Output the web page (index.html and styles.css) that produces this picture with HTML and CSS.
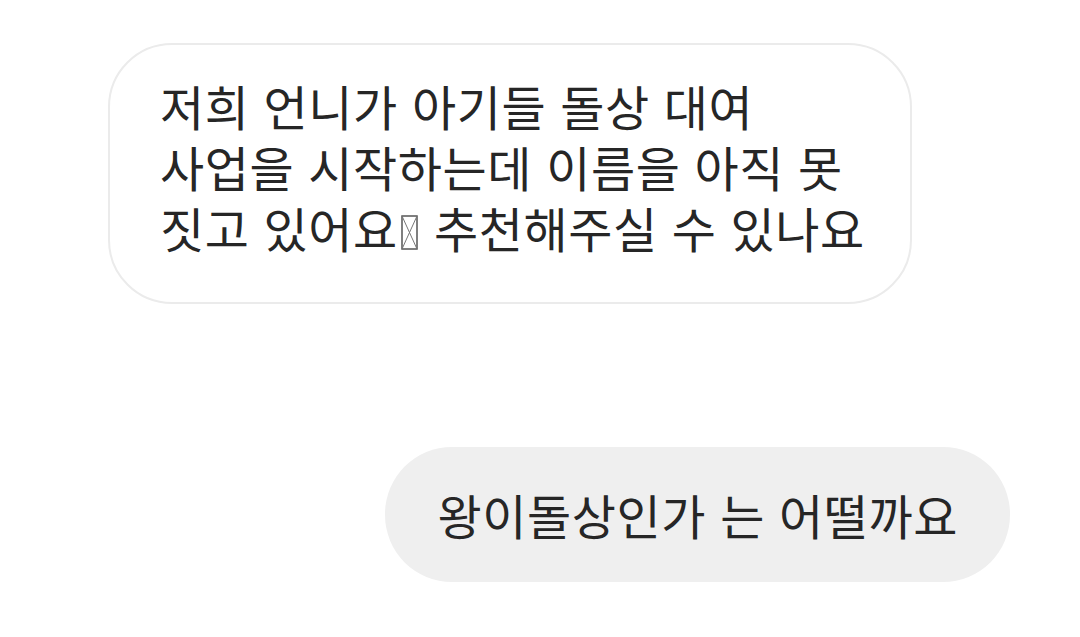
FILE: index.html
```html
<!DOCTYPE html>
<html lang="ko">
<head>
  <meta charset="UTF-8">
  <title>대화</title>
  <link rel="stylesheet" href="styles.css">
</head>
<body>
  <div class="chat">
    <!-- received message -->
    <div class="row row-in">
      <div class="bubble bubble-in">
        저희 언니가 아기들 돌상 대여<br>
        사업을 시작하는데 이름을 아직 못<br>
        짓고 있어요<span class="tofu"><svg width="17" height="35" viewBox="0 0 17 35"><rect x="1" y="1" width="15" height="33" fill="none" stroke="#555" stroke-width="1.5"/><path d="M1 1 L16 34 M16 1 L1 34" stroke="#777" stroke-width="1"/></svg></span> 추천해주실 수 있나요
      </div>
    </div>

    <!-- sent message -->
    <div class="row row-out">
      <div class="bubble bubble-out">왕이돌상인가 는 어떨까요</div>
    </div>
  </div>
</body>
</html>
```

FILE: styles.css
```css
* {
  box-sizing: border-box;
}

body {
  margin: 0;
  background: #fff;
  font-family: "Noto Sans CJK KR", "Noto Sans", sans-serif;
  color: #262626;
}

.chat {
  display: flex;
  flex-direction: column;
  padding: 43px 70px 0 108px;
}

.row {
  display: flex;
}

.row-out {
  justify-content: flex-end;
  margin-top: 143px;
}

.bubble {
  font-size: 48px;
  line-height: 61px;
  letter-spacing: 0.6px;
  white-space: nowrap;
}

.bubble-in {
  width: 804px;
  background: #fff;
  border: 2px solid #ebebeb;
  border-radius: 64px;
  padding: 30px 44px 44px 50px;
}

.bubble-out {
  background: #efefef;
  border-radius: 67px;
  padding: 37px 52px 37px 53px;
}

.tofu {
  display: inline-block;
  vertical-align: -2px;
  margin: 0 2px 0 3px;
}

.tofu svg {
  display: block;
}
```
